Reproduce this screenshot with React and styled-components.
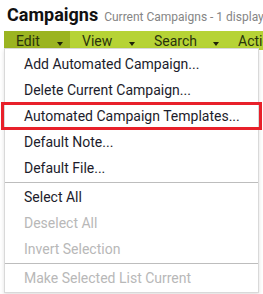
import styled, { createGlobalStyle } from 'styled-components';

const GlobalStyle = createGlobalStyle`
  body {
    margin: 0;
    background: #fff;
    font-family: Roboto, "Liberation Sans", sans-serif;
    overflow: hidden;
  }
`;

const Page = styled.div`
  width: 263px;
  height: 294px;
  padding: 0 0 0 4px;
  box-sizing: border-box;
  position: relative;
`;

const Header = styled.div`
  display: flex;
  align-items: baseline;
  height: 31px;
  padding-left: 3px;
  white-space: nowrap;
  overflow: hidden;
`;

const Title = styled.h1`
  margin: 0;
  font-size: 18px;
  line-height: 29px;
  font-weight: 700;
  color: #111;
`;

const Subtitle = styled.span`
  margin-left: 6px;
  font-size: 12px;
  color: #858585;
`;

const Toolbar = styled.div`
  display: flex;
  height: 19px;
  background: #b6d335;
  white-space: nowrap;
`;

const MenuButton = styled.div`
  position: relative;
  display: flex;
  align-items: center;
  flex: 0 0 auto;
  width: ${(p) => p.$width}px;
  padding-left: 12px;
  box-sizing: border-box;
  font-size: 14px;
  color: #2a330c;
  background: ${(p) => (p.$open ? '#9bb421' : 'transparent')};
`;

const Caret = styled.span`
  position: absolute;
  right: 7px;
  top: 11px;
  width: 0;
  height: 0;
  border-left: 3.5px solid transparent;
  border-right: 3.5px solid transparent;
  border-top: 4px solid #1e2208;
`;

const Dropdown = styled.ul`
  position: absolute;
  top: 17px;
  left: 0;
  width: 255px;
  margin: 0;
  padding: 2px 0 1px;
  list-style: none;
  background: #fff;
  border: 1px solid #d9d9d9;
  box-sizing: border-box;
  box-shadow: 0 2px 4px rgba(0, 0, 0, 0.12);
  z-index: 2;
`;

const Item = styled.li`
  position: relative;
  height: 26px;
  line-height: 26px;
  padding-left: 19px;
  font-size: 14px;
  color: ${(p) => (p.$disabled ? '#b8b8b8' : '#1c1c2b')};

  ${(p) =>
    p.$marked &&
    `
    &::after {
      content: '';
      position: absolute;
      left: -4px;
      right: -4px;
      top: -1px;
      bottom: -1px;
      border: 3px solid #e8202a;
    }
  `}
`;

const Separator = styled.li`
  height: 1px;
  margin: 1px 0 1px;
  background: #bdbdbd;
`;

const items = [
  { label: 'Add Automated Campaign...' },
  { label: 'Delete Current Campaign...' },
  { label: 'Automated Campaign Templates...', marked: true },
  { label: 'Default Note...' },
  { label: 'Default File...' },
  { sep: true },
  { label: 'Select All' },
  { label: 'Deselect All', disabled: true },
  { label: 'Invert Selection', disabled: true },
  { sep: true },
  { label: 'Make Selected List Current', disabled: true },
];

export default function App() {
  return (
    <>
      <GlobalStyle />
      <Page>
        <Header>
          <Title>Campaigns</Title>
          <Subtitle>Current Campaigns - 1 displayed</Subtitle>
        </Header>
        <Toolbar>
          <MenuButton $width={66} $open>
            Edit
            <Caret />
            <Dropdown>
              {items.map((it, i) =>
                it.sep ? (
                  <Separator key={i} />
                ) : (
                  <Item key={i} $disabled={it.disabled} $marked={it.marked}>
                    {it.label}
                  </Item>
                )
              )}
            </Dropdown>
          </MenuButton>
          <MenuButton $width={72}>
            View
            <Caret />
          </MenuButton>
          <MenuButton $width={84}>
            Search
            <Caret />
          </MenuButton>
          <MenuButton $width={80}>Actions</MenuButton>
        </Toolbar>
      </Page>
    </>
  );
}
